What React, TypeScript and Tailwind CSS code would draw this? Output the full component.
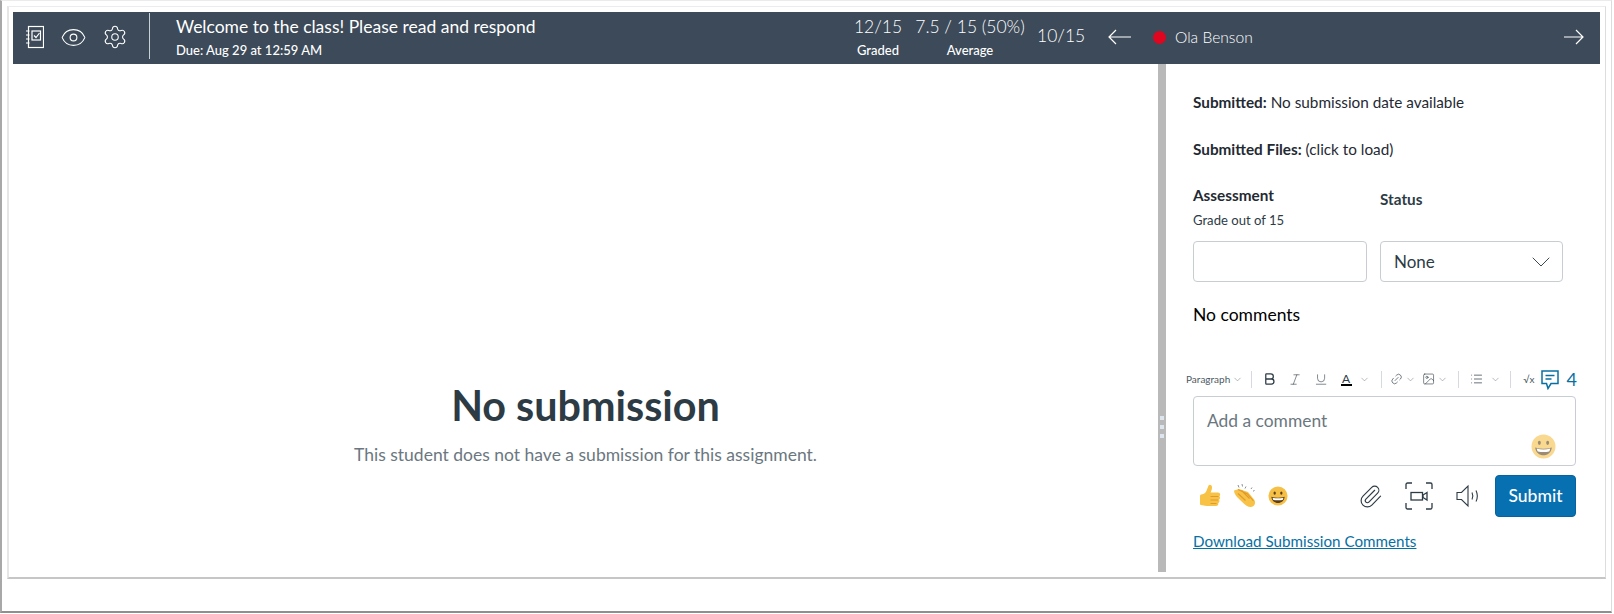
import { Bold, ChevronDown, Eye, Image, Italic, Link2, List, Paperclip, Settings, Underline } from 'lucide-react';

function NotebookIcon() {
  return (
    <svg width="18" height="24" viewBox="0 0 18 24" fill="none" stroke="#fff" strokeWidth="1.2">
      <rect x="2.500" y="1.500" width="15" height="21" />
      <path d="M0 6h3.500M0 10h3.500M0 14h3.500M0 18h3.500" />
      <rect x="6" y="6" width="8.500" height="9" />
      <path d="M8 10.500l2 2 3.500-4.500" />
    </svg>
  );
}

function LongArrow({ dir, width }: { dir: 'left' | 'right'; width: number }) {
  return (
    <svg width={width} height="16" viewBox={`0 0 ${width} 16`} fill="none" stroke="#fff" strokeWidth="1.200" className="mb-[3px]">
      {dir === 'left' ? (
        <path d={`M${width} 8H1M8 1L1 8l7 7`} />
      ) : (
        <path d={`M0 8H${width - 1}M${width - 8} 1l7 7-7 7`} />
      )}
    </svg>
  );
}

function Smile({ size, className }: { size: number; className?: string }) {
  return (
    <svg width={size} height={size} viewBox="0 0 24 24" className={className}>
      <circle cx="12" cy="12" r="11.500" fill="#f6c046" />
      <ellipse cx="8" cy="8.500" rx="1.400" ry="2" fill="#5a3d1a" />
      <ellipse cx="16" cy="8.500" rx="1.400" ry="2" fill="#5a3d1a" />
      <path d="M4 13c5 1.600 11 1.600 16 0-.6 5-4 7.500-8 7.500S4.600 18 4 13z" fill="#5a3d1a" />
      <path d="M5.500 14c4 1.100 9 1.100 13 0-.2 1.400-.5 2-1 2.700-3.500.7-7.500.7-11 0-.5-.7-.8-1.300-1-2.700z" fill="#fff" />
    </svg>
  );
}

function ThumbsUp() {
  return (
    <svg width="22" height="24" viewBox="0 0 22 24">
      <path d="M1 12c0-1 1-1.800 2-1.800 2 0 3.500-1.200 4.500-3.500C8.500 4.500 9 2.500 9.500 1.500c.6-1.200 3.300-1 3.500 1.500.2 2-.8 4-1.300 5.500h7.300c2.500 0 2.800 3 1.300 3.800 1.300.8 1 3-.3 3.500.9 1 .5 2.800-.8 3.200.5 1.300-.3 3-2.200 3H8c-3 0-4-1-6-1-.7 0-1-.6-1-1.500z" fill="#f8c246" />
      <path d="M11.500 12.500h8M11.500 16h7.500M11.500 19.500h6" stroke="#e09a2b" strokeWidth="1" fill="none" />
    </svg>
  );
}

function Clap() {
  return (
    <svg width="24" height="24" viewBox="0 0 24 24">
      <path d="M1 6.500l5-1.500 9 3 6 7.500c1.800 2.300 1.300 5-.5 6.500-2 1.700-4.700 1.200-6.500 0-3.200-2.200-6.500-5.500-9.500-8.500C2.800 11.800 1 9 1 6.500z" fill="#f8c246" />
      <path d="M5 5.500l9.500 4.500 6 7M5 9.500l7.500 7M8.500 6.500l8 8" stroke="#e09a2b" strokeWidth="1.100" fill="none" />
      <path d="M5 1l1 2.500M9 0l.5 2.500M13 2.500l-1 2M19 3.500l-1 1.500M21.500 6.500l-1.500.7" stroke="#8a8f94" strokeWidth="1" fill="none" />
    </svg>
  );
}

function CaptureIcon() {
  return (
    <svg width="28" height="28" viewBox="0 0 28 28" fill="none" stroke="#2d3b45" strokeWidth="1.300">
      <path d="M1 7V2.500A1.500 1.500 0 0 1 2.500 1H7M21 1h4.500A1.500 1.500 0 0 1 27 2.500V7M27 21v4.500a1.500 1.500 0 0 1-1.500 1.500H21M7 27H2.500A1.500 1.500 0 0 1 1 25.500V21" />
      <rect x="6" y="10.500" width="11.500" height="7.500" />
      <path d="M22 10.500l-4 2.500v2.500l4 2.500z" />
    </svg>
  );
}

function SpeakerIcon() {
  return (
    <svg width="24" height="24" viewBox="0 0 24 24" fill="none" stroke="#2d3b45" strokeWidth="1.100">
      <path d="M1 8.500h4.500L12 2v20l-6.500-6.500H1z" />
      <path d="M16 8.500c1.100 2.300 1.100 4.700 0 7M20 6.500c1.700 3.500 1.700 7.500 0 11" />
    </svg>
  );
}

function CommentIcon() {
  return (
    <svg width="18" height="20" viewBox="0 0 18 20" fill="none" stroke="#0770a3" strokeWidth="1.500">
      <path d="M1 1h16v12.500h-7L7 18.500l-1.500-5H1z" />
      <path d="M4.500 5.500h9M4.500 9h6" />
    </svg>
  );
}

function ToolbarDivider() {
  return <div className="h-[17px] w-px bg-[#d5dade]" />;
}

function Caret() {
  return <ChevronDown size={11} strokeWidth={1.1} className="text-[#6b7780]" />;
}

export default function App() {
  return (
    <div className="h-[614px] w-[1614px] bg-white font-['Lato',sans-serif] text-[#2d3b45]">
      <div className="h-[613px] w-[1612px] border-t border-l-2 border-b-2 border-r border-t-[#ebebeb] border-l-[#a8a8a8] border-b-[#8f8f8f] border-r-[#dcdcdc] pl-[5px] pt-[5px]">
        <div className="h-[573px] w-[1599px] border-t border-l-2 border-b-2 border-r border-t-[#ececec] border-l-[#e6e6e6] border-b-[#c6c6c6] border-r-[#dddddd] pl-[4px] pt-[5px]">
          {/* Top bar */}
          <header className="flex h-[52px] w-[1587px] items-center bg-[#3c4a59] pl-[13px] pr-[16px] text-white">
            <div className="mb-[2px] flex w-[123px] items-center">
              <NotebookIcon />
              <Eye size={27} strokeWidth={1} className="ml-[16px]" />
              <Settings size={26} strokeWidth={1} className="ml-[15px]" />
            </div>
            <div className="mb-[4px] h-[46px] w-px bg-[#c9d1d8]" />
            <div className="mb-[3px] ml-[26px] w-[672px]">
              <div className="text-[17.500px] leading-[24px]">Welcome to the class! Please read and respond</div>
              <div className="mt-[3px] text-[13px] font-medium leading-[16px]">Due: Aug 29 at 12:59 AM</div>
            </div>
            <div className="mb-[3px] w-[60px] text-center">
              <div className="text-[17.500px] font-light leading-[24px]">12/15</div>
              <div className="mt-[3px] text-[13px] font-medium leading-[16px]">Graded</div>
            </div>
            <div className="mb-[3px] w-[124px] text-center">
              <div className="text-[17.500px] font-light leading-[24px]">7.5 / 15 (50%)</div>
              <div className="mt-[3px] text-[13px] font-medium leading-[16px]">Average</div>
            </div>
            <div className="mb-[3px] ml-[5px] w-[71px] text-[17.500px] font-light">10/15</div>
            <LongArrow dir="left" width={23} />
            <div className="mb-[2px] ml-[22px] h-[13px] w-[13px] rounded-full bg-[#e0061f]" />
            <div className="mb-[1px] ml-[9px] flex-1 text-[15.600px] font-light">Ola Benson</div>
            <LongArrow dir="right" width={20} />
          </header>

          <main className="flex h-[508px] w-[1593px]">
            {/* Preview */}
            <section className="flex w-[1145px] flex-col items-center pt-[313px]">
              <h1 className="text-[41.300px] font-bold leading-[56px] text-[#2d3b45]">No submission</h1>
              <p className="mt-[8px] text-[17.500px] leading-[28px] text-[#6b7780]">
                This student does not have a submission for this assignment.
              </p>
            </section>

            {/* Resize handle */}
            <div className="flex w-[8px] flex-col items-center gap-[5px] bg-[#b9b9b9] pt-[352px]">
              <div className="h-[4px] w-[4px] bg-[#dde6ee]" />
              <div className="h-[4px] w-[4px] bg-[#dde6ee]" />
              <div className="h-[4px] w-[4px] bg-[#dde6ee]" />
            </div>

            {/* Grading panel */}
            <aside className="w-[440px] pl-[27px] text-[15.300px] text-[#1f2a33]">
              <p className="mt-[27px] leading-[22px]">
                <span className="font-bold">Submitted:</span> No submission date available
              </p>
              <p className="mt-[25px] leading-[22px]">
                <span className="font-bold">Submitted Files:</span> (click to load)
              </p>
              <div className="mt-[24px] flex gap-[13px]">
                <div className="w-[174px]">
                  <div className="font-bold leading-[22px]">Assessment</div>
                  <div className="mt-[4px] text-[13.100px] leading-[20px] text-[#2d3b45]">Grade out of 15</div>
                  <div className="mt-[11px] h-[41px] w-[174px] rounded-[4px] border border-[#c7cdd1] bg-white" />
                </div>
                <div className="w-[183px] pt-[4px]">
                  <div className="font-bold leading-[22px] text-[#2d3b45]">Status</div>
                  <div className="mt-[31px] flex h-[41px] items-center justify-between rounded-[4px] border border-[#c7cdd1] pl-[13px] pr-[5px]">
                    <span className="text-[17px] text-[#2d3b45]">None</span>
                    <ChevronDown size={32} strokeWidth={0.7} className="text-[#2d3b45]" />
                  </div>
                </div>
              </div>
              <p className="mt-[21px] text-[17.500px] leading-[24px] text-black">No comments</p>

              {/* Comment toolbar */}
              <div className="ml-[-8px] mt-[42px] flex h-[20px] w-[392px] items-center text-[#2d3b45]">
                <span className="ml-[1px] text-[10px] text-[#4d5a64]">Paragraph</span>
                <span className="ml-[2px]"><Caret /></span>
                <span className="ml-[8px]"><ToolbarDivider /></span>
                <Bold size={16} strokeWidth={2} className="ml-[10px]" />
                <Italic size={15} strokeWidth={1} className="ml-[11px]" />
                <Underline size={15} strokeWidth={1} className="ml-[11px]" />
                <div className="ml-[13px] flex flex-col items-center">
                  <span className="text-[12px] leading-[11px]">A</span>
                  <div className="h-[2px] w-[11px] bg-black" />
                </div>
                <span className="ml-[7px]"><Caret /></span>
                <span className="ml-[11px]"><ToolbarDivider /></span>
                <Link2 size={14} strokeWidth={1.1} className="ml-[8px] -rotate-45" />
                <span className="ml-[2px]"><Caret /></span>
                <Image size={14} strokeWidth={1.1} className="ml-[6px]" />
                <span className="ml-[2px]"><Caret /></span>
                <span className="ml-[10px]"><ToolbarDivider /></span>
                <List size={14} strokeWidth={1.3} className="ml-[11px]" />
                <span className="ml-[7px]"><Caret /></span>
                <span className="ml-[9px]"><ToolbarDivider /></span>
                <span className="ml-[12px] text-[10px] text-[#4d5a64]">√x</span>
                <span className="ml-[6px] mt-[2px]"><CommentIcon /></span>
                <span className="ml-[8px] text-[18px] text-[#0770a3]">4</span>
              </div>

              {/* Comment box */}
              <div className="relative mt-[7px] h-[70px] w-[383px] rounded-[4px] border border-[#c7cdd1] pl-[13px] pt-[12px] text-[17.400px] leading-[24px] text-[#6b7780]">
                Add a comment
                <Smile size={25} className="absolute bottom-[6px] right-[19px] opacity-60" />
              </div>

              {/* Actions */}
              <div className="mt-[9px] flex h-[42px] w-[383px] items-center">
                <span className="ml-[6px]"><ThumbsUp /></span>
                <span className="ml-[12px]"><Clap /></span>
                <span className="ml-[11px]"><Smile size={20} /></span>
                <Paperclip size={25} strokeWidth={1.1} className="ml-[70px] text-[#2d3b45]" />
                <span className="ml-[22px]"><CaptureIcon /></span>
                <span className="ml-[23px]"><SpeakerIcon /></span>
                <button className="ml-[15px] h-[42px] w-[81px] rounded-[4px] border border-[#0662a0] bg-[#0770b0] text-[17.500px] font-medium text-white">
                  Submit
                </button>
              </div>

              <a className="mt-[13px] block text-[15.200px] leading-[22px] text-[#0770a3] underline">
                Download Submission Comments
              </a>
            </aside>
          </main>
        </div>
      </div>
    </div>
  );
}
